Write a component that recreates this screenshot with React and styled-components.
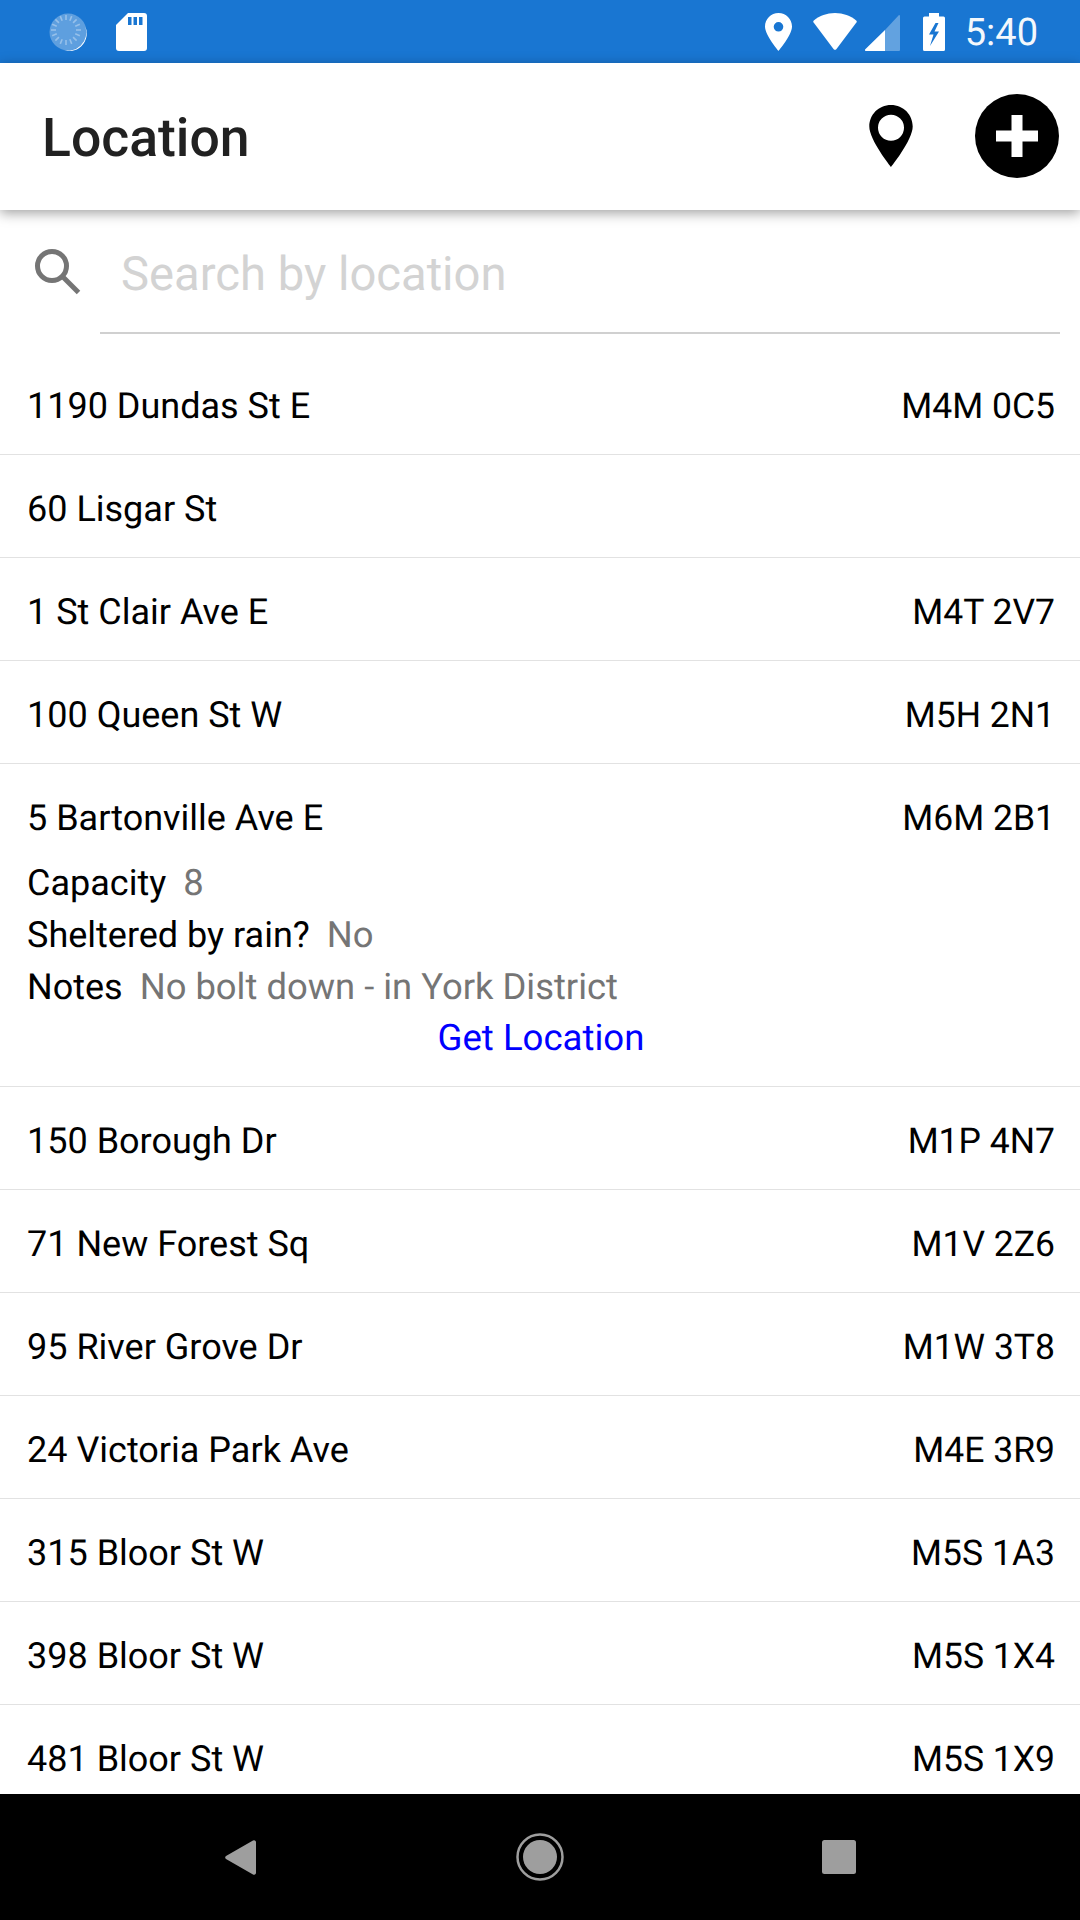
import React from 'react';
import styled, { createGlobalStyle } from 'styled-components';

const Global = createGlobalStyle`
  html, body { margin: 0; padding: 0; background: #fff; }
  body { font-family: Roboto, "Noto Sans", sans-serif; text-rendering: geometricPrecision; }
`;
const Screen = styled.div`
  width: 1080px; height: 1920px; display: flex; flex-direction: column; overflow: hidden; background: #fff;
`;
const StatusBar = styled.div`
  height: 63px; flex: none; background: #1976d2; display: flex; align-items: center; padding: 0 42px 0 49px; color: #fff;
`;
const StatusLeft = styled.div`display: flex; align-items: center; gap: 29px; flex: 1;`;
const StatusRight = styled.div`display: flex; align-items: center;`;
const Clock = styled.span`font-size: 38px; font-weight: 400; margin-left: 20px; line-height: 59px; padding-top: 4px; color: #f4f8fc;`;
const AppBar = styled.header`
  height: 147px; flex: none; background: #fff; display: flex; align-items: center; padding: 0 21px 0 42px;
  box-shadow: 0 3px 12px rgba(0,0,0,.38); position: relative; z-index: 2;
`;
const Title = styled.h1`
  margin: 0; flex: 1; font-size: 53.500px; font-weight: 500; color: #212121; line-height: 1; padding-top: 4px;
`;
const PinButton = styled.div`display: flex; margin-right: 62px; position: relative; top: -1px;`;
const AddButton = styled.div`display: flex; position: relative; top: -1px;`;
const SearchRow = styled.div`
  flex: none; display: flex; padding: 0 20px 18px 35px;
`;
const SearchIcon = styled.div`width: 65px; padding-top: 39px; flex: none;`;
const SearchField = styled.div`
  flex: 1; box-sizing: border-box; height: 124px; padding-left: 21px; border-bottom: 2px solid #d0d0d0;
  font-size: 47.200px; color: #d3d3d3; line-height: 128px;
`;
const List = styled.div`flex: 1; min-height: 0; overflow: hidden;`;
const Row = styled.div`
  box-sizing: border-box; border-bottom: 1px solid #e2e2e2; padding: 0 25px 0 27px;
  display: flex; flex-direction: column;
`;
const RowHead = styled.div`
  box-sizing: border-box; display: flex; justify-content: space-between; height: 102px; padding-top: 5px;
  align-items: center; flex: none; font-size: 36px; color: #000;
`;
const PostalCode = styled.span`font-size: 35.500px;`;
const Detail = styled.div`
  font-size: 36px; color: #000; line-height: 52px; margin-top: ${p => p.$first ? '-9px' : '0'};
`;
const Muted = styled.span`color: #757575; margin-left: 17px; font-size: 36.400px;`;
const GetLocation = styled.div`
  text-align: center; color: #0000ff; font-size: 36.600px; line-height: 52px; padding-bottom: 22px; margin-top: -1px;
`;
const NavBar = styled.nav`
  height: 126px; flex: none; background: #000; display: flex; align-items: center; justify-content: center;
  padding-right: 1px;
`;
const NavSlot = styled.div`
  width: 299px; display: flex; justify-content: center;
`;

const rows = [
  ['1190 Dundas St E', 'M4M 0C5'],
  ['60 Lisgar St', ''],
  ['1 St Clair Ave E', 'M4T 2V7'],
  ['100 Queen St W', 'M5H 2N1'],
  ['5 Bartonville Ave E', 'M6M 2B1', true],
  ['150 Borough Dr', 'M1P 4N7'],
  ['71 New Forest Sq', 'M1V 2Z6'],
  ['95 River Grove Dr', 'M1W 3T8'],
  ['24 Victoria Park Ave', 'M4E 3R9'],
  ['315 Bloor St W', 'M5S 1A3'],
  ['398 Bloor St W', 'M5S 1X4'],
  ['481 Bloor St W', 'M5S 1X9'],
];

const Spinner = () => (
  <svg width="38" height="38" viewBox="0 0 38 38">
    <circle cx="19" cy="19" r="18.500" fill="#fff" fillOpacity=".3" />
    <path d="M36 13a18 18 0 0 1-24 23a17.500 17.500 0 0 0 24-23z" fill="#fff" />
    <g stroke="#fff" strokeOpacity=".35" strokeWidth="1.600">
      {Array.from({ length: 16 }).map((_, i) => (
        <line key={i} x1="17" y1="2" x2="17" y2="7" transform={`rotate(${i * 22.5} 17 17)`} />
      ))}
    </g>
  </svg>
);
const SdCard = () => (
  <svg width="31" height="38" viewBox="0 0 31 38">
    <path d="M12 0h16a3 3 0 0 1 3 3v32a3 3 0 0 1-3 3H3a3 3 0 0 1-3-3V12z" fill="#fff" />
    <path d="M12 4h3.500v8H12zM17.500 4H21v8h-3.500zM23 4h3.500v8H23z" fill="#1976d2" />
  </svg>
);
const StatusPin = () => (
  <svg width="27" height="38" viewBox="0 0 27 38" style={{ marginRight: 21 }}>
    <path fillRule="evenodd" d="M13.500 0C6 0 0 6 0 13.500 0 22 13.500 38 13.500 38S27 22 27 13.500C27 6 21 0 13.500 0zm0 9a4.800 4.800 0 1 1 0 9.600 4.800 4.800 0 0 1 0-9.600z" fill="#fff" />
  </svg>
);
const Wifi = () => (
  <svg width="44" height="38" viewBox="0 0 44 38" style={{ marginRight: 8 }}>
    <path d="M22 0c8.200 0 15.500 2.800 21.200 7.500a1.500 1.500 0 0 1 .2 2L23.500 36a2 2 0 0 1-3 0L.6 9.500a1.500 1.500 0 0 1 .2-2C6.500 2.800 13.800 0 22 0z" fill="#fff" />
  </svg>
);
const Signal = () => (
  <svg width="35" height="36" viewBox="0 0 35 36" style={{ marginTop: 2, marginRight: 23 }}>
    <path d="M34 0a1 1 0 0 1 1 1v34a1 1 0 0 1-1 1H20V15z" fill="#fff" fillOpacity=".32" />
    <path d="M20 15v21H1a1 1 0 0 1-.700-1.700z" fill="#fff" />
  </svg>
);
const Battery = () => (
  <svg width="22" height="38" viewBox="0 0 22 38">
    <path fillRule="evenodd" d="M6 0h10v3.500h4.500A1.500 1.500 0 0 1 22 5v31.500a1.500 1.500 0 0 1-1.500 1.500H1.500A1.500 1.500 0 0 1 0 36.500V5a1.500 1.500 0 0 1 1.500-1.500H6zM12.500 10L6 21.500h4.500L7 33l9-14.500h-4.500L15.500 10z" fill="#fff" />
  </svg>
);
const BigPin = () => (
  <svg width="44" height="62" viewBox="0 0 44 62">
    <path fillRule="evenodd" d="M22 0C9.500 0 .3 9.800.3 21.500.3 35 22 62 22 62s21.700-27 21.700-40.500C43.700 9.800 34.500 0 22 0zm0 9.700a13 13 0 1 1 0 26 13 13 0 0 1 0-26z" fill="#000" />
  </svg>
);
const Plus = () => (
  <svg width="84" height="84" viewBox="0 0 84 84">
    <circle cx="42" cy="42" r="42" fill="#000" />
    <path d="M36.500 21h11v15.500H63v11H47.500V63h-11V47.500H21v-11h15.500z" fill="#fff" />
  </svg>
);
const Magnifier = () => (
  <svg width="46" height="46" viewBox="0 0 46 46" style={{ display: 'block' }}>
    <circle cx="17" cy="17" r="14.500" fill="none" stroke="#757575" strokeWidth="5" />
    <path d="M27.500 27.500L43.500 43.500" stroke="#757575" strokeWidth="5" fill="none" />
  </svg>
);
const Back = () => (
  <svg width="31" height="35" viewBox="0 0 31 35">
    <path d="M28 .6a2 2 0 0 1 3 1.400v31a2 2 0 0 1-3 1.400L1 19a2 2 0 0 1 0-3z" fill="#9e9e9e" />
  </svg>
);
const Home = () => (
  <svg width="48" height="48" viewBox="0 0 48 48">
    <circle cx="24" cy="24" r="22.500" fill="none" stroke="#9e9e9e" strokeWidth="2.500" />
    <circle cx="24" cy="24" r="17" fill="#9e9e9e" />
  </svg>
);
const Recent = () => (
  <svg width="34" height="34" viewBox="0 0 34 34">
    <rect width="34" height="34" rx="2.500" fill="#9e9e9e" />
  </svg>
);

export default function App() {
  return (
    <Screen>
      <Global />
      <StatusBar>
        <StatusLeft><Spinner /><SdCard /></StatusLeft>
        <StatusRight>
          <StatusPin /><Wifi /><Signal /><Battery />
          <Clock>5:40</Clock>
        </StatusRight>
      </StatusBar>
      <AppBar>
        <Title>Location</Title>
        <PinButton><BigPin /></PinButton>
        <AddButton><Plus /></AddButton>
      </AppBar>
      <SearchRow>
        <SearchIcon><Magnifier /></SearchIcon>
        <SearchField>Search by location</SearchField>
      </SearchRow>
      <List>
        {rows.map(([street, code, open]) => (
          <Row key={street}>
            <RowHead><span>{street}</span><PostalCode>{code}</PostalCode></RowHead>
            {open && (
              <>
                <Detail $first>Capacity<Muted>8</Muted></Detail>
                <Detail>Sheltered by rain?<Muted>No</Muted></Detail>
                <Detail>Notes<Muted>No bolt down - in York District</Muted></Detail>
                <GetLocation>Get Location</GetLocation>
              </>
            )}
          </Row>
        ))}
      </List>
      <NavBar>
        <NavSlot><Back /></NavSlot>
        <NavSlot><Home /></NavSlot>
        <NavSlot><Recent /></NavSlot>
      </NavBar>
    </Screen>
  );
}
